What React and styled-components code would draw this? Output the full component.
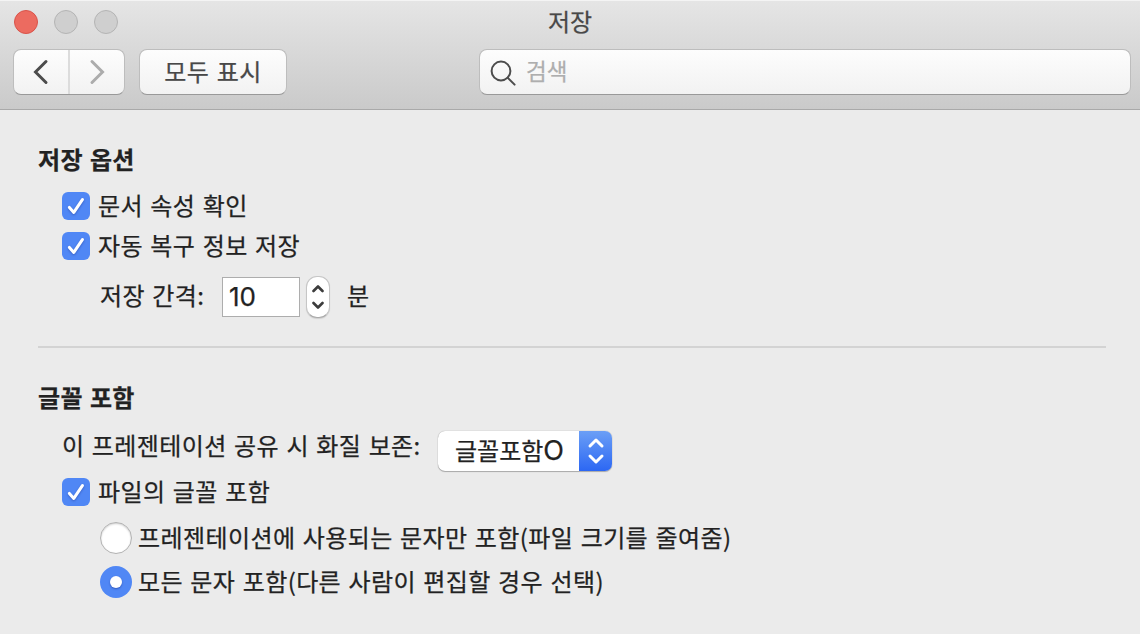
import React, { useState } from 'react';
import styled, { createGlobalStyle } from 'styled-components';

const GlobalStyle = createGlobalStyle`
  * {
    box-sizing: border-box;
  }
  body {
    margin: 0;
    background: #ebebeb;
    font-family: "Noto Sans CJK KR", sans-serif;
    font-size: 24px;
    color: #222;
    -webkit-text-stroke: 0.25px;
  }
  button, input {
    font: inherit;
    color: inherit;
    margin: 0;
    padding: 0;
    border: 0;
    outline: 0;
    background: none;
  }
`;

export default function App() {
  const [confirm, setConfirm] = useState(true);
  const [recover, setRecover] = useState(true);
  const [embed, setEmbed] = useState(true);
  const [mode, setMode] = useState('all');
  const [minutes, setMinutes] = useState('10');

  return (
    <Window>
      <GlobalStyle />
      <Header>
        <TitleBar>
          <Lights>
            <Light $close />
            <Light />
            <Light />
          </Lights>
          <Title>저장</Title>
          <span />
        </TitleBar>
        <Toolbar>
          <NavGroup>
            <NavButton>
              <Chevron $color="#4c4c4c" viewBox="0 0 16 26">
                <path d="M13 2.5L2.5 13L13 23.5" />
              </Chevron>
            </NavButton>
            <NavButton>
              <Chevron $color="#acacac" viewBox="0 0 16 26">
                <path d="M3 2.5L13.5 13L3 23.5" />
              </Chevron>
            </NavButton>
          </NavGroup>
          <ShowAll>모두 표시</ShowAll>
          <Search>
            <SearchIcon viewBox="0 0 28 28">
              <circle cx="11" cy="11" r="9.4" />
              <path d="M17.6 17.6L24.6 24.6" />
            </SearchIcon>
            <SearchInput placeholder="검색" />
          </Search>
        </Toolbar>
      </Header>

      <Content>
        <Heading>저장 옵션</Heading>
        <Row $height={40} $top={7} $indent={24}>
          <Check on={confirm} onClick={() => setConfirm(!confirm)} />
          <Text>문서 속성 확인</Text>
        </Row>
        <Row $height={40} $indent={24}>
          <Check on={recover} onClick={() => setRecover(!recover)} />
          <Text>자동 복구 정보 저장</Text>
        </Row>
        <Row $height={42} $top={10} $indent={62}>
          <FieldLabel $width={122} $lift={4}>저장 간격:</FieldLabel>
          <NumberInput value={minutes} onChange={e => setMinutes(e.target.value)} />
          <Stepper>
            <svg width="12" height="28" viewBox="0 0 12 28">
              <path d="M1.5 8L6 3.5L10.5 8" />
              <path d="M1.5 20L6 24.5L10.5 20" />
            </svg>
          </Stepper>
          <Text $lift={4}>분</Text>
        </Row>
        <Divider />
        <Heading>글꼴 포함</Heading>
        <Row $height={40} $top={14} $indent={24}>
          <FieldLabel $width={376} $lift={12}>이 프레젠테이션 공유 시 화질 보존:</FieldLabel>
          <Select>
            <SelectValue>글꼴포함<Latin>O</Latin></SelectValue>
            <SelectArrows>
              <svg width="18" height="28" viewBox="0 0 18 28">
                <path d="M3 9L9 3L15 9" />
                <path d="M3 19L9 25L15 19" />
              </svg>
            </SelectArrows>
          </Select>
        </Row>
        <Row $height={42} $indent={24}>
          <Check on={embed} onClick={() => setEmbed(!embed)} />
          <Text>파일의 글꼴 포함</Text>
        </Row>
        <Row $height={44} $top={3} $indent={62}>
          <Radio $on={mode === 'used'} onClick={() => setMode('used')} />
          <Text>프레젠테이션에 사용되는 문자만 포함(파일 크기를 줄여줌)</Text>
        </Row>
        <Row $height={44} $indent={62}>
          <Radio $on={mode === 'all'} onClick={() => setMode('all')} />
          <Text>모든 문자 포함(다른 사람이 편집할 경우 선택)</Text>
        </Row>
      </Content>
    </Window>
  );
}

function Check({ on, onClick }) {
  return (
    <CheckBox $on={on} onClick={onClick}>
      {on && (
        <svg width="28" height="28" viewBox="0 0 28 28">
          <path d="M7.4 15.4L11.8 20.4L20.4 7.6" />
        </svg>
      )}
    </CheckBox>
  );
}

const Window = styled.div`
  width: 1140px;
  height: 634px;
  overflow: hidden;
  background: #ebebeb;
`;

const Header = styled.header`
  height: 110px;
  border-top: 1px solid #f4f4f4;
  border-bottom: 1px solid #a9a9a9;
  background: linear-gradient(#e5e5e5, #cacaca);
`;

const TitleBar = styled.div`
  display: grid;
  grid-template-columns: 1fr auto 1fr;
  align-items: center;
  height: 42px;
`;

const Lights = styled.div`
  display: flex;
  gap: 16px;
  padding-left: 14px;
`;

const Light = styled.span`
  width: 24px;
  height: 24px;
  border-radius: 50%;
  border: 1px solid ${p => (p.$close ? '#d9534a' : '#b4b4b4')};
  background: ${p => (p.$close ? '#ec6b60' : '#cfcfcf')};
`;

const Title = styled.h1`
  margin: 0;
  padding-bottom: 2px;
  font-size: 24px;
  line-height: 38px;
  font-weight: 400;
  color: #484848;
`;

const Toolbar = styled.div`
  display: flex;
  align-items: center;
  padding: 6px 9px 0 13px;
`;

const Bezel = styled.div`
  height: 46px;
  border: 1px solid #bdbdbd;
  border-bottom-color: #999;
  border-radius: 8px;
  background: linear-gradient(#fdfdfd, #f2f2f2);
`;

const NavGroup = styled(Bezel)`
  display: flex;
  width: 112px;
`;

const NavButton = styled.button`
  display: flex;
  flex: 1;
  align-items: center;
  justify-content: center;
  & + & {
    border-left: 2px solid #dcdcdc;
  }
`;

const Chevron = styled.svg`
  width: 16px;
  height: 26px;
  fill: none;
  stroke: ${p => p.$color};
  stroke-width: 3;
  stroke-linecap: round;
`;

const ShowAll = styled(Bezel).attrs({ as: 'button' })`
  width: 148px;
  margin-left: 14px;
  padding-bottom: 3px;
  border: 1px solid #bdbdbd;
  border-bottom-color: #999;
  background: linear-gradient(#fdfdfd, #f2f2f2);
  color: #484848;
  line-height: 40px;
  letter-spacing: 0.5px;
  word-spacing: 1.5px;
`;

const Search = styled(Bezel)`
  display: flex;
  flex: 1;
  align-items: center;
  margin-left: 192px;
  padding-left: 10px;
`;

const SearchIcon = styled.svg`
  width: 28px;
  height: 28px;
  margin-top: 4px;
  fill: none;
  stroke: #4c4c4c;
  stroke-width: 2;
  stroke-linecap: round;
`;

const SearchInput = styled.input`
  flex: 1;
  height: 42px;
  margin-left: 8px;
  padding-bottom: 5px;
  font-size: 22.5px;
  &::placeholder {
    color: #aeaeae;
    opacity: 1;
  }
`;

const Content = styled.main`
  padding: 29px 34px 0 38px;
`;

const Heading = styled.h2`
  margin: 0;
  font-size: 24px;
  font-weight: 700;
  line-height: 40px;
  letter-spacing: 0.3px;
  word-spacing: 1.4px;
`;

const Row = styled.div`
  display: flex;
  align-items: center;
  height: ${p => p.$height}px;
  margin-top: ${p => p.$top || 0}px;
  padding-left: ${p => p.$indent}px;
`;

const Text = styled.span`
  padding-bottom: ${p => p.$lift || 2}px;
  line-height: 40px;
  white-space: nowrap;
  letter-spacing: 0.4px;
  word-spacing: 1.6px;
`;

const FieldLabel = styled(Text)`
  width: ${p => p.$width}px;
`;

const Latin = styled.span`
  font-family: Inter, sans-serif;
  font-size: 27px;
`;

const CheckBox = styled.button`
  width: 28px;
  height: 28px;
  margin-right: 8px;
  border-radius: 6px;
  background: ${p => (p.$on ? '#5087f5' : '#fff')};
  svg {
    display: block;
    fill: none;
    stroke: #fff;
    stroke-width: 3;
    stroke-linecap: round;
    stroke-linejoin: round;
    filter: drop-shadow(0 1px 1px rgba(0, 0, 80, 0.3));
  }
`;

const Radio = styled.button`
  display: flex;
  align-items: center;
  justify-content: center;
  width: 32px;
  height: 32px;
  margin-right: 6px;
  border-radius: 50%;
  border: ${p => (p.$on ? 'none' : '1px solid #b2b2b2')};
  background: ${p => (p.$on ? '#5087f5' : '#fff')};
  box-shadow: ${p => (p.$on ? 'none' : 'inset 0 1px 2px rgba(0, 0, 0, 0.2)')};
  &::after {
    content: '';
    width: 12px;
    height: 12px;
    border-radius: 50%;
    background: ${p => (p.$on ? '#fff' : 'none')};
    box-shadow: ${p => (p.$on ? '0 1px 2px rgba(0, 0, 80, 0.35)' : 'none')};
  }
`;

const NumberInput = styled.input`
  width: 78px;
  height: 40px;
  padding: 0 0 1px 6px;
  border: 1px solid #adadad;
  background: #fff;
  font-family: Inter, sans-serif;
  font-size: 26px;
`;

const Stepper = styled.button`
  display: flex;
  align-items: center;
  justify-content: center;
  width: 24px;
  height: 42px;
  margin: 0 17px 0 6px;
  border: 1px solid #c6c6c6;
  border-bottom-color: #aaa;
  border-radius: 11px;
  background: #fff;
  box-shadow: 0 1px 1px rgba(0, 0, 0, 0.12);
  svg {
    flex: none;
    fill: none;
    stroke: #3c3c3c;
    stroke-width: 2.6;
    stroke-linecap: round;
    stroke-linejoin: round;
  }
`;

const Divider = styled.hr`
  height: 2px;
  margin: 28px 0 29px;
  border: 0;
  background: #d3d3d3;
`;

const Select = styled.button`
  display: flex;
  width: 174px;
  height: 40px;
  border-radius: 7px;
  overflow: hidden;
  background: #fff;
  box-shadow: 0 0 1px rgba(0, 0, 0, 0.4), 0 1px 1px rgba(0, 0, 0, 0.25);
`;

const SelectValue = styled.span`
  flex: 1;
  padding-left: 17px;
  text-align: left;
  line-height: 37px;
  white-space: nowrap;
`;

const SelectArrows = styled.span`
  display: flex;
  align-items: center;
  justify-content: center;
  width: 33px;
  background: linear-gradient(#6b9ff6, #2c67f3);
  svg {
    fill: none;
    stroke: #fff;
    stroke-width: 3;
    stroke-linecap: round;
    stroke-linejoin: round;
  }
`;
